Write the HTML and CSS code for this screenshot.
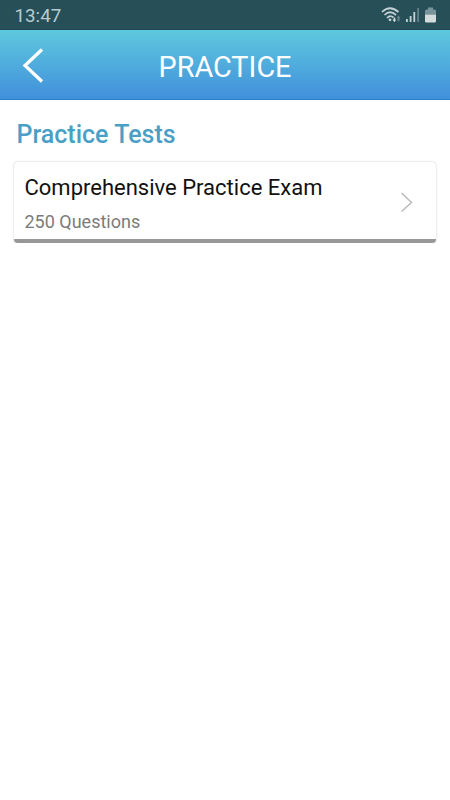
FILE: index.html
```html
<!DOCTYPE html>
<html lang="en">
<head>
    <meta charset="UTF-8">
    <meta name="viewport" content="width=device-width, initial-scale=1.0">
    <title>Practice</title>
    <link rel="stylesheet" href="styles.css">
</head>
<body>

    <!-- Status bar -->
    <div class="status-bar">
        <span class="time">13:47</span>
        <svg class="status-icons" width="56" height="18" viewBox="0 0 56 18">
            <g fill="none" stroke="#c3d1d4" stroke-width="1.7">
                <path d="M1 6Q9 -1.500 17.500 6"/>
                <path d="M3.500 9Q9 3.500 15 9"/>
                <path d="M6 12Q9 8.500 12.500 11.500"/>
            </g>
            <circle cx="9" cy="13.800" r="1.400" fill="#c3d1d4"/>
            <path d="M11.500 13.500h1.200v-2h1.400v2h1.200l-1.900 2.700z" fill="#d4dcde"/>
            <path d="M16.500 12.200h-1l2-3 2 3h-1v3h-2z" fill="#648188"/>
            <g fill="#c3d1d4">
                <rect x="25" y="13" width="1.800" height="3"/>
                <rect x="28.700" y="10" width="1.800" height="6"/>
                <rect x="32.400" y="6" width="1.800" height="10"/>
            </g>
            <rect x="36.200" y="2" width="1.800" height="14" fill="#648188"/>
            <path d="M44 8.500V5q0-1.500 1.500-1.500h1.500V1.500h5v2h1.500q1.500 0 1.500 1.500v3.500z" fill="#78949a"/>
            <path d="M44 8.500h11v6.700q0 1.300-1.300 1.300h-8.400q-1.300 0-1.300-1.300z" fill="#d4dcde"/>
        </svg>
    </div>

    <!-- Header -->
    <div class="header">
        <svg class="back" width="24" height="38" viewBox="0 0 24 38">
            <path d="M21 3.500L4 19.500L21 35.500" fill="none" stroke="#fff" stroke-width="3.300"/>
        </svg>
        <h1>PRACTICE</h1>
    </div>

    <div class="content">
        <h2>Practice Tests</h2>
        <div class="card">
            <div class="card-text">
                <span class="card-title">Comprehensive Practice Exam</span>
                <span class="card-count">250 Questions</span>
            </div>
            <svg class="arrow" width="14" height="22" viewBox="0 0 14 22">
                <path d="M1.500 2L11.500 11.500L1.500 20.500" fill="none" stroke="#bbb" stroke-width="1.500"/>
            </svg>
        </div>
    </div>

</body>
</html>
```
FILE: styles.css
```css
body {
    margin: 0;
    font-family: Roboto, sans-serif;
    background: #fff;
}
.status-bar {
    display: flex;
    align-items: center;
    justify-content: space-between;
    box-sizing: border-box;
    height: 30px;
    padding: 0 13px 0 14.5px;
    background: #264f58;
    border-bottom: 1px solid #204752;
}
.time {
    padding-top: 2px;
    font-size: 18.8px;
    line-height: 30px;
    color: #b7cbd0;
}
.status-icons {
    margin-top: 1px;
}
.header {
    display: grid;
    grid-template-columns: 50px 1fr 50px;
    align-items: center;
    box-sizing: border-box;
    height: 70px;
    background: linear-gradient(#5ec8de, #4190db);
    border-bottom: 1px solid #2c80ca;
}
.back {
    margin-left: 21px;
}
.header h1 {
    margin: 4px 0 0;
    font-size: 28.8px;
    font-weight: 400;
    text-align: center;
    color: #fff;
}
.content {
    padding: 19px 14px 0;
}
.content h2 {
    margin: 0 0 11px 2.5px;
    font-size: 25px;
    font-weight: 500;
    line-height: 32px;
    color: #4a9fc6;
}
.card {
    display: flex;
    align-items: center;
    justify-content: space-between;
    box-sizing: border-box;
    height: 81px;
    padding: 0 22px 0 10.5px;
    background: #fff;
    border-bottom: 4px solid #989898;
    border-radius: 4px;
    box-shadow: 0 0 2px rgba(0, 0, 0, 0.25);
}
.card-text {
    display: flex;
    flex-direction: column;
    gap: 10px;
    padding-top: 6px;
}
.card-title {
    font-size: 22px;
    line-height: 26px;
    color: #111;
}
.card-count {
    font-size: 18px;
    line-height: 22px;
    color: #7b7b7b;
}
.arrow {
    margin-top: 3px;
}
```
